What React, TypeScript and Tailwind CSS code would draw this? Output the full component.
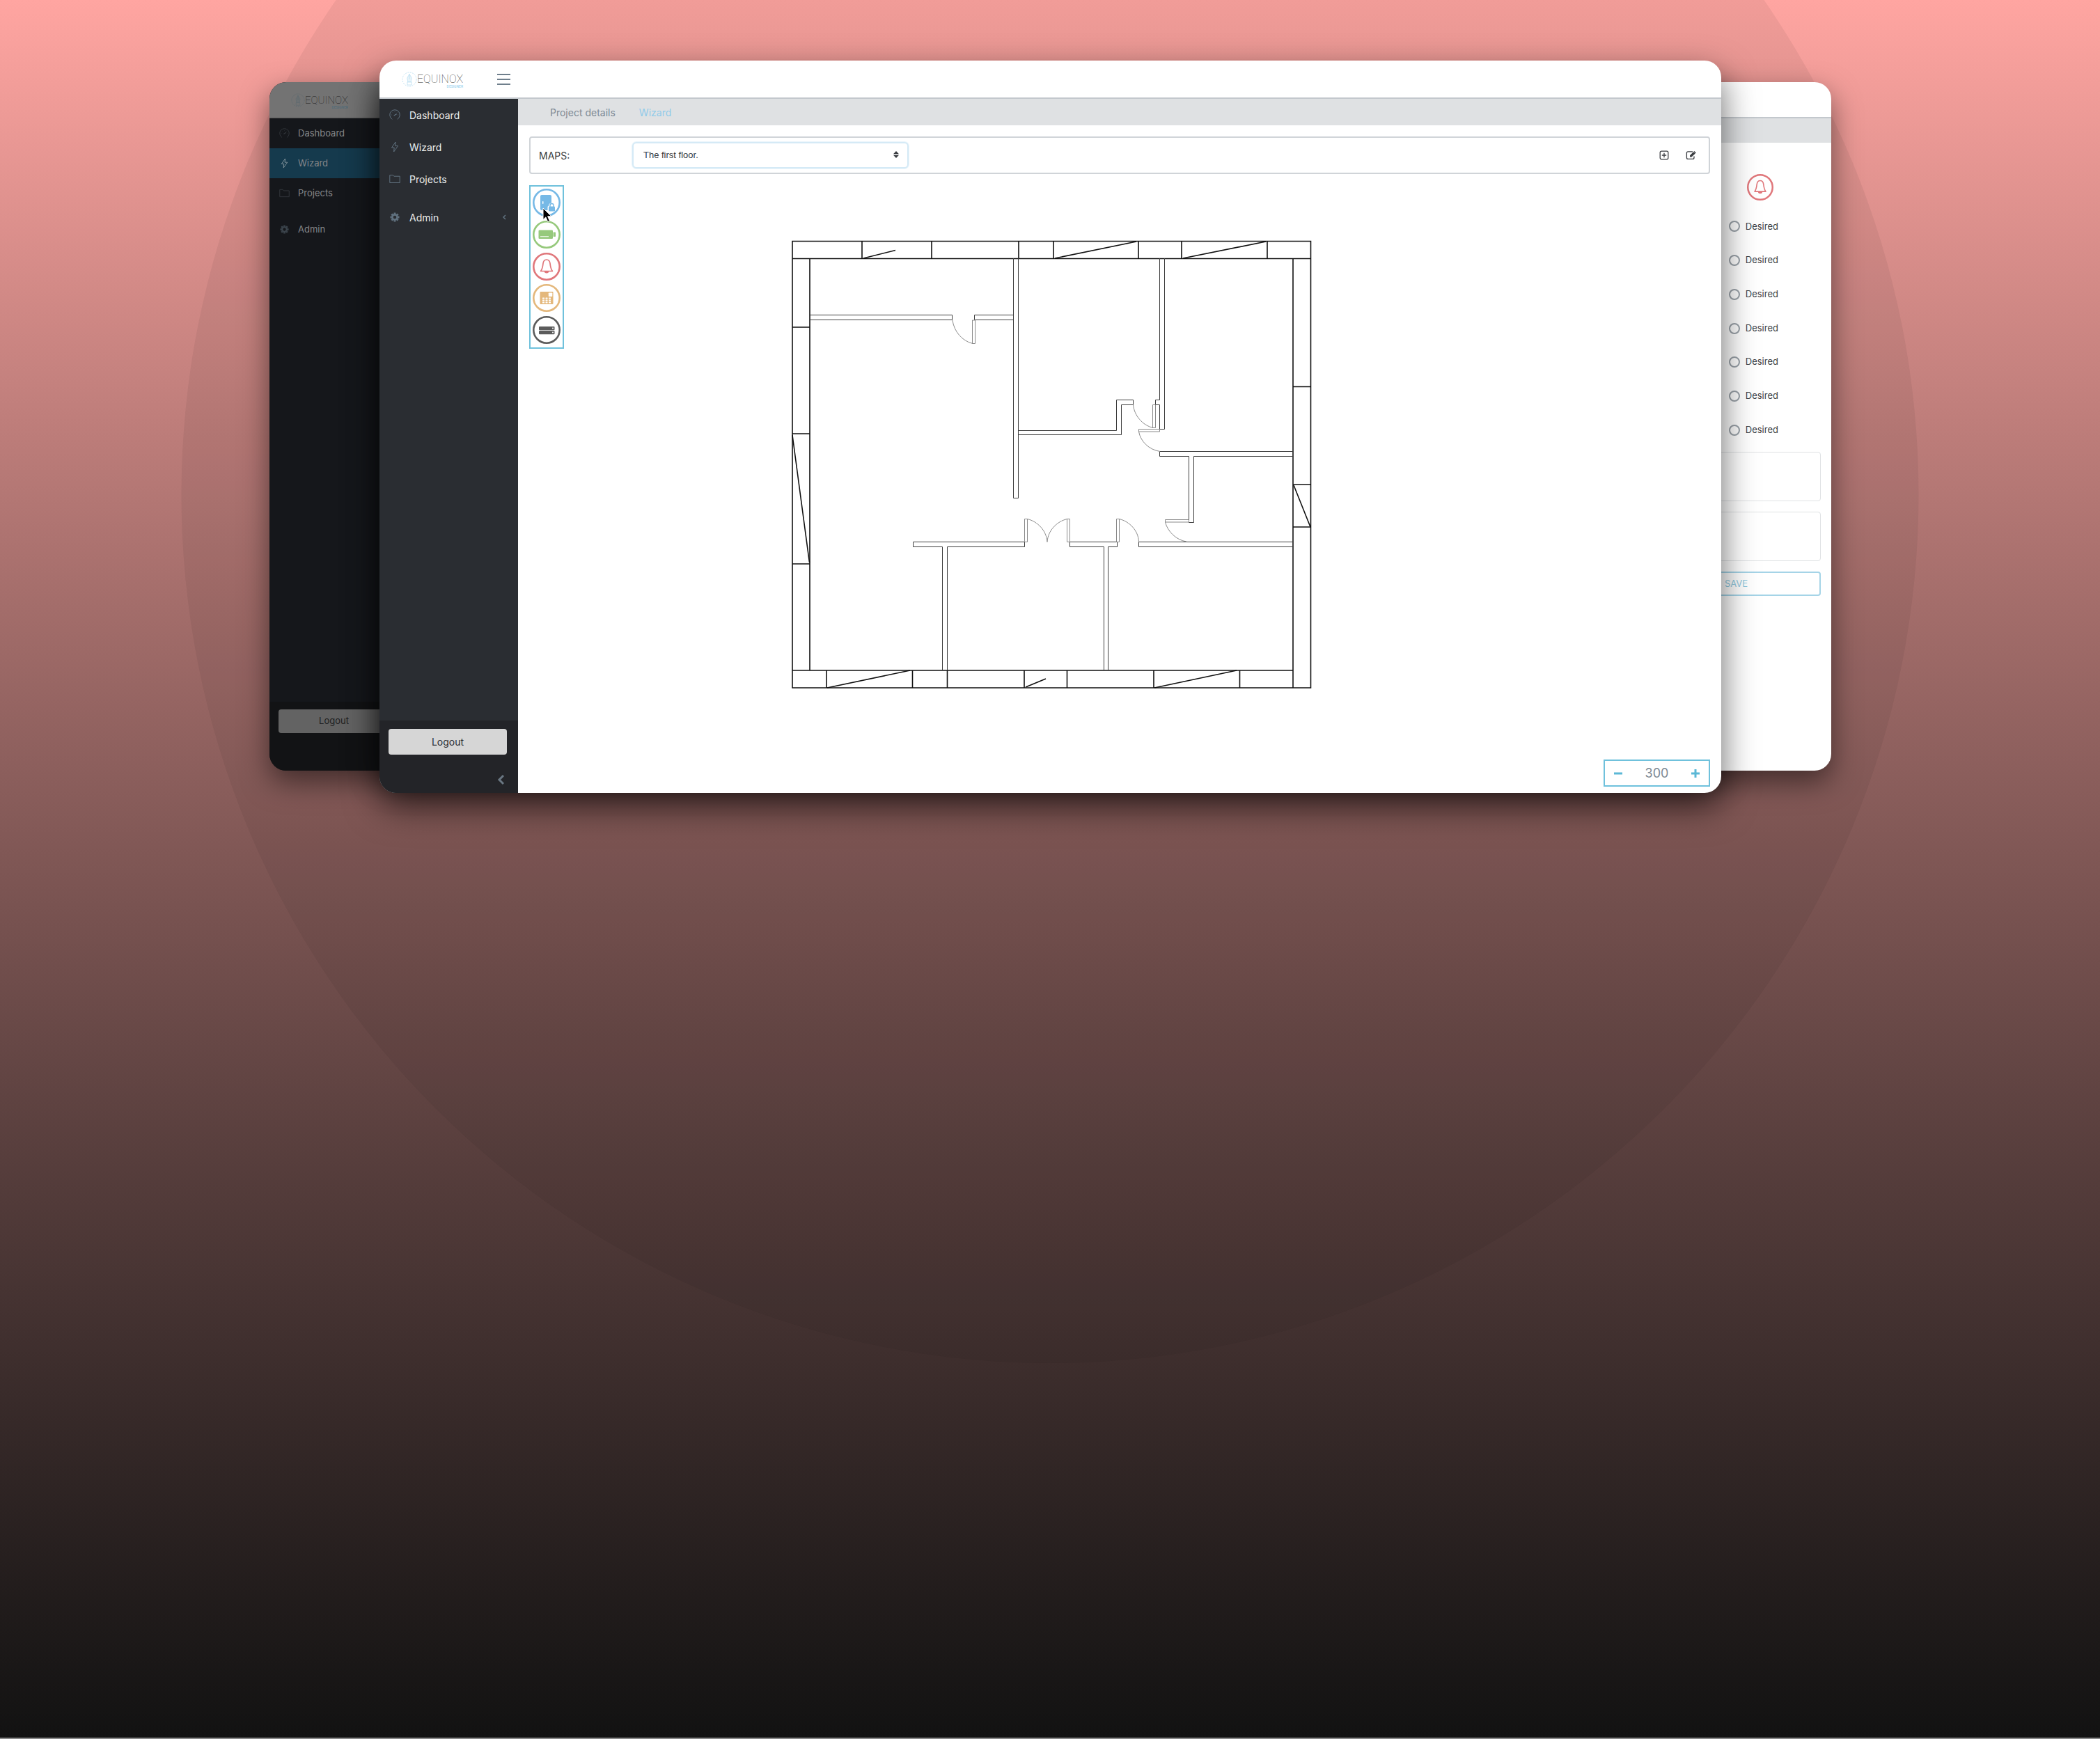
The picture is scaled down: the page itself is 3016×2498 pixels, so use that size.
import React from "react";

const NAV = ["Dashboard", "Wizard", "Projects"];

function Logo({ dim }: { dim?: boolean }) {
  return (
    <span className="flex items-center">
      <svg viewBox="0 0 22 22" className={dim ? "size-5 text-[#5d6a71]" : "size-[22px] text-[#b5dcf0]"} fill="none" stroke="currentColor">
        <circle cx="11" cy="11" r="10" strokeDasharray="2 1.4" strokeWidth="0.8" />
        <path d="M11 3v8M8.500 14.500c.4-3-1.500-4.500-.2-6.500L11 3.500 13.700 8c1.300 2-.6 3.500-.2 6.500z" fill="currentColor" fillOpacity="0.3" strokeWidth="0.7" />
        <path d="M8 15h6v4H8z" strokeWidth="0.7" />
      </svg>
      <span className="flex flex-col items-end pt-1 font-[Roboto,sans-serif]">
        <span className={dim ? "text-[15px] leading-4 font-thin text-[#222]" : "text-[16px] leading-4 font-thin text-[#333]"}>EQUINOX</span>
        <span className={dim ? "text-[5px] leading-[4px] text-[#4b6b7b]" : "text-[5px] leading-[4px] text-[#8accec]"}>DESIGNER</span>
      </span>
    </span>
  );
}

function NavIcon({ name, className }: { name: string; className: string }) {
  if (name === "Dashboard")
    return (
      <svg viewBox="0 0 16 16" className={className} fill="none" stroke="currentColor" strokeLinecap="round">
        <path d="M4 14.200A7.300 7.300 0 1 1 12 14.200" />
        <path d="M7.200 8.800l3-1.800" strokeWidth="1.300" />
        <path d="M3.200 8h.4M5 4.800l.3.300M8 3.400v.3M11 4.800l-.2.200M12.600 8h.3" strokeWidth="0.500" />
      </svg>
    );
  if (name === "Wizard")
    return (
      <svg viewBox="0 0 16 16" className={className} fill="none" stroke="currentColor" strokeLinejoin="round">
        <path d="M9.200 1L3.500 9h3.700L6.600 15 12.500 6.600H8.600z" />
      </svg>
    );
  if (name === "Projects")
    return (
      <svg viewBox="0 0 16 16" className={className} fill="none" stroke="currentColor" strokeLinejoin="round">
        <path d="M.8 2.500h4.700l1.300 1.700h8.400v9.300H.8z" />
      </svg>
    );
  return (
    <svg viewBox="0 0 16 16" className={className}>
      <circle cx="8" cy="8" r="3.600" fill="none" stroke="currentColor" strokeWidth="2.600" />
      <path d="M8 1.500v2M8 12.500v2M1.500 8h2M12.500 8h2M3.400 3.400l1.500 1.500M11.100 11.100l1.500 1.500M3.400 12.600l1.500-1.500M11.100 4.900l1.500-1.500" stroke="currentColor" strokeWidth="2.800" />
    </svg>
  );
}

const COLORS: Record<string, string> = {
  door: "#76b9e6",
  camera: "#96c97c",
  bell: "#e0777b",
  keypad: "#e4b87c",
  server: "#5c5c5c",
};

const DIGITS = [0, 1, 2];

function Device({ kind, className }: { kind: string; className: string }) {
  const c = COLORS[kind];
  return (
    <svg viewBox="0 0 40 40" className={className} fill={c}>
      <circle cx="20" cy="20" r="18.700" fill="none" stroke={c} strokeWidth="2.600" />
      {kind === "door" && (
        <>
          <path d="M13 9h12a2 2 0 0 1 2 2v9.500a4.500 4.500 0 0 0-4 4.300A2 2 0 0 0 21.500 27v4H13a2 2 0 0 1-2-2V11a2 2 0 0 1 2-2z" />
          <rect x="14" y="18" width="1.500" height="4" rx="0.700" fill="white" />
          <rect x="23" y="25.500" width="9" height="7" rx="1.200" />
          <path d="M25 26v-2a2.500 2.500 0 0 1 5 0v2" fill="none" stroke={c} strokeWidth="1.400" />
        </>
      )}
      {kind === "camera" && (
        <>
          <rect x="8.500" y="13.500" width="20.500" height="12.500" rx="1.200" />
          <rect x="29.500" y="16.500" width="3.500" height="6.500" rx="0.700" />
          <path d="M11 22.800h12" stroke="white" strokeWidth="1.100" />
        </>
      )}
      {kind === "bell" && (
        <>
          <path d="M20 10c-3 0-4.600 2.300-5 5.300-.5 5-1.200 8.200-3.400 11.200h16.800c-2.200-3-2.900-6.200-3.400-11.200-.4-3-2-5.300-5-5.300z" fill="none" stroke={c} strokeWidth="1.700" strokeLinejoin="round" />
          <path d="M16.800 27h6.400a3.200 2.500 0 0 1-6.400 0z" />
        </>
      )}
      {kind === "keypad" && (
        <>
          <rect x="10.500" y="11" width="19" height="18" rx="1" />
          <rect x="22.800" y="12.500" width="5.500" height="5.500" rx="0.800" fill="white" />
          {DIGITS.map((r) =>
            DIGITS.map((k) => <rect key={`${r}-${k}`} x={14 + k * 4.500} y={19.500 + r * 3} width="3" height="2" rx="0.500" fill="white" />),
          )}
        </>
      )}
      {kind === "server" && (
        <>
          <rect x="9" y="15" width="22.500" height="5.200" rx="1" />
          <rect x="9" y="21" width="22.500" height="5.200" rx="1" />
          <circle cx="29" cy="17.600" r="1" fill="white" />
          <circle cx="29" cy="23.600" r="1" fill="white" />
        </>
      )}
    </svg>
  );
}

function FloorPlan() {
  return (
    <svg viewBox="1136 344 749 647" className="w-[749px] max-w-full" fill="none" role="img" aria-label="Floor plan">
      <g stroke="#111" strokeWidth="1.600">
        <path d="M1138 346.500H1882.500V988H1138z" />
        <path d="M1138 371.500H1882M1163 371V963M1138 963H1857M1857 371V988" />
        <path d="M1238 346v25M1338 346v25M1463 346v25M1513 346v25M1635 346v25M1697 346v25M1820 346v25" />
        <path d="M1138 470h25M1138 623h25M1138 810h25M1857 555.500h25M1857 696h25M1857 757h25" />
        <path d="M1187 963v25M1310.500 963v25M1360.500 963v25M1471 963v25M1532.500 963v25M1657 963v25M1780.500 963v25" />
        <path d="M1240 371l46-11.500M1515 371l117-24M1699 371l119-24M1138 625l24.500 183M1188 988l119-25M1473 987l29-12M1658 988l118-25M1858 697l24 60" />
      </g>
      <g stroke="#3c3c3c" strokeWidth="1">
        <path d="M1163 452.500H1367.500V459.500H1163M1455.500 452.500H1399.500V459.500H1455.500" />
        <path d="M1455.500 371V715.500H1462.500V371" />
        <path d="M1462.500 618.500H1603.500V574.500H1627.500V581.500H1610.500V624.500H1462.500" />
        <path d="M1665.500 371V574.500H1659.500V581.500H1665.500V616.500H1672.500V371" />
        <path d="M1857 648.500H1665.500V655.500H1707.500V750.500H1714.500V655.500H1857" />
        <path d="M1353.500 963V785.500H1311.500V778.500H1471.500V785.500H1360.500V963" />
        <path d="M1585.500 963V785.500H1536.500V778.500H1604.500V785.500H1591.500V963" />
        <path d="M1857 778.500H1635.500V785.500H1857" />
      </g>
      <g stroke="#8a8a8a" strokeWidth="1">
        <path d="M1396.500 460h4v33.500h-4zM1655.500 581.500h4v33h-4zM1635.500 616.500h30v3.500h-30zM1673.500 746.500h34v3.500h-34z" />
        <path d="M1471.500 745.500h4v33h-4zM1532.500 745.500h4v33h-4zM1603.500 745.500h4v33h-4z" />
        <path d="M1368 460C1370 476 1382 490 1397 493.500M1627.500 581.500C1629 597 1641 611 1656 614.500M1635.500 620C1638 634 1650 646 1666 648.500M1673.500 750C1677 764 1690 776 1704 778" />
        <path d="M1475.500 745.500C1490 749 1503 762 1504 778.500C1505 762 1518 749 1532.500 745.500M1607.500 745.500C1622 749 1635 762 1635.500 778.500" />
      </g>
    </svg>
  );
}

function BackLeft() {
  return (
    <section className="z-0 col-start-2 col-end-4 row-start-1 mt-[31px] mb-8 flex flex-col overflow-hidden rounded-3xl bg-[#15171b] shadow-[0_16px_40px_rgba(0,0,0,0.5)]">
      <header className="flex h-[52px] items-center border-b border-[#555] bg-[#737373] pl-[31px]">
        <Logo dim />
      </header>
      <nav className="flex grow flex-col text-[13px] text-[#85878a]">
        {NAV.map((n) => (
          <a key={n} href="#" className={n === "Wizard" ? "flex h-[43px] items-center gap-3 bg-[#153a4d] pl-[14px]" : "flex h-[43px] items-center gap-3 pl-[14px]"}>
            <NavIcon name={n} className={n === "Wizard" ? "size-[15px] text-[#85959d]" : "size-[15px] text-[#33383d]"} />
            {n}
          </a>
        ))}
        <a href="#" className="mt-[9px] flex h-[43px] items-center gap-3 pl-[14px]">
          <NavIcon name="Admin" className="size-[15px] text-[#3a434b]" />
          Admin
        </a>
      </nav>
      <footer className="h-[99px] bg-[#121315] px-[13px] pt-[11px]">
        <button className="h-[34px] w-[159px] rounded-sm bg-[#636363] text-[13px] text-[#1d1e20]">Logout</button>
      </footer>
    </section>
  );
}

function BackRight() {
  return (
    <section className="z-0 col-start-3 col-end-5 row-start-1 mt-[31px] mb-8 flex flex-col overflow-hidden rounded-3xl bg-white shadow-[0_16px_40px_rgba(0,0,0,0.5)]">
      <div className="h-[52px] border-b-2 border-[#c3c8cd]" />
      <div className="h-[35px] bg-[#dfe1e3]" />
      <form className="flex flex-col items-end pt-[45px] pr-[15px]">
        <div className="mr-[68px]">
          <Device kind="bell" className="size-[38px]" />
        </div>
        <div className="mt-[13px] mr-[61px] flex h-[341px] flex-col">
          {[1, 2, 3, 4, 5, 6, 7].map((i) => (
            <label key={i} className="flex grow items-center gap-2 text-[13px] text-[#3c4043]">
              <input type="radio" name={`device-${i}`} className="size-4 appearance-none rounded-full border-2 border-[#9aa2a9] bg-white" />
              Desired
            </label>
          ))}
        </div>
        <textarea aria-label="Notes" className="mt-[7px] h-[71px] w-[243px] resize-none rounded-sm border border-[#dfe2e4]" />
        <textarea aria-label="Comments" className="mt-[15px] h-[71px] w-[243px] resize-none rounded-sm border border-[#dfe2e4]" />
        <button type="button" className="mt-[15px] h-[35px] w-[243px] rounded-sm border-2 border-[#a5d4e7] text-[13px] text-[#8fc9e0]">SAVE</button>
      </form>
    </section>
  );
}

function Front() {
  return (
    <section className="z-10 col-start-3 row-start-1 flex min-h-[1052px] flex-col overflow-hidden rounded-3xl bg-white shadow-[0_20px_50px_rgba(0,0,0,0.6)]">
      <header className="flex h-[55px] items-center border-b-2 border-[#c3c8cd] pl-[32px]">
        <div className="w-[137px]">
          <Logo />
        </div>
        <button aria-label="Toggle menu" className="flex h-4 w-[19px] flex-col justify-between text-[#6f7f8c]">
          <span className="h-0.5 w-full bg-current" />
          <span className="h-0.5 w-full bg-current" />
          <span className="h-0.5 w-full bg-current" />
        </button>
      </header>
      <div className="flex grow">
        <aside className="flex w-[199px] shrink-0 flex-col bg-[#2a2d32]">
          <nav className="flex grow flex-col text-[14px] text-[#eceded]">
            {NAV.map((n) => (
              <a key={n} href="#" className="flex h-[46px] items-center gap-[13px] pl-[14px]">
                <NavIcon name={n} className="size-4 text-[#60717f]" />
                {n}
              </a>
            ))}
            <a href="#" className="mt-[9px] flex h-[46px] items-center gap-[13px] pr-[17px] pl-[14px]">
              <NavIcon name="Admin" className="size-4 text-[#60717f]" />
              <span className="grow">Admin</span>
              <svg viewBox="0 0 6 8" className="h-2 w-1.5 text-[#60717f]" fill="none" stroke="currentColor" strokeWidth="1.500">
                <path d="M5 1L2 4l3 3" />
              </svg>
            </a>
          </nav>
          <footer className="flex h-[104px] flex-col justify-between bg-[#232428] pt-3 pr-4 pb-[11px] pl-[13px]">
            <button className="h-[37px] w-full rounded-sm bg-[#d6d6d6] text-[14px] text-[#2b2e33]">Logout</button>
            <button aria-label="Collapse sidebar" className="mr-1 self-end text-[#6a7783]">
              <svg viewBox="0 0 10 16" className="h-4 w-2.5" fill="none" stroke="currentColor" strokeWidth="3">
                <path d="M9 2L3 8l6 6" />
              </svg>
            </button>
          </footer>
        </aside>
        <main className="flex min-w-0 grow flex-col">
          <div className="flex h-[38px] items-center gap-[34px] bg-[#dfe1e3] pl-[46px] text-[14px]">
            <a href="#" className="text-[#7d8994]">Project details</a>
            <a href="#" className="text-[#8fcbea]">Wizard</a>
          </div>
          <div className="mx-4 mt-4 flex h-[54px] items-center rounded-sm border-2 border-[#d0d4d8] pr-[17px] pl-3 text-[14px] text-[#3a3d41]">
            <label htmlFor="map" className="w-[134px]">MAPS:</label>
            <div className="relative">
              <select id="map" className="h-[38px] w-[397px] appearance-none rounded-md border-2 border-[#d5eaf6] bg-white px-[14px] font-['Liberation_Sans',sans-serif] text-[13px] ring-1 ring-[#eaf5fb] outline-none">
                <option>The first floor.</option>
              </select>
              <svg viewBox="0 0 8 10" className="pointer-events-none absolute top-[13px] right-[14px] h-2.5 w-2" fill="#3a3d41">
                <path d="M4 0l4 4.300H0zM4 10l4-4.300H0z" />
              </svg>
            </div>
            <div className="ml-auto flex gap-6">
              <button aria-label="Add map">
                <svg viewBox="0 0 14 14" className="size-[14px]" fill="none" stroke="#3a3d41" strokeWidth="1.300">
                  <rect x="1.200" y="1.200" width="11.600" height="11.600" rx="2" />
                  <path d="M7 3.800v6.400M3.800 7h6.400" />
                </svg>
              </button>
              <button aria-label="Edit map">
                <svg viewBox="0 0 16 14" className="h-[14px] w-4" fill="none" stroke="#3a3d41" strokeWidth="1.300">
                  <path d="M10 1.800H3.300A1.900 1.900 0 0 0 1.400 3.700v6.800a1.900 1.900 0 0 0 1.900 1.900h6.800a1.900 1.900 0 0 0 1.900-1.900V8.500" />
                  <path d="M12.300 1l2.500 2.400-6.300 6.200H6V7.200z" fill="#3a3d41" stroke="none" />
                  <path d="M11.200 2.200l2.400 2.300" stroke="white" strokeWidth="0.500" />
                </svg>
              </button>
            </div>
          </div>
          <div className="mt-4 flex grow px-4">
            <div className="relative flex h-[235px] w-[50px] shrink-0 flex-col items-center justify-between border-2 border-[#6fc1dc] pt-[3px] pb-[5px]">
              {Object.keys(COLORS).map((k) => (
                <button key={k} aria-label={k}>
                  <Device kind={k} className="size-10" />
                </button>
              ))}
              <svg viewBox="0 0 14 22" className="absolute top-[30px] left-[17px] h-[22px] w-[14px]" fill="black" stroke="white" strokeWidth="1">
                <path d="M1 1v16.500l3.800-3.600 2.900 6.600 2.800-1.200-2.900-6.500h5.400z" />
              </svg>
            </div>
            <div className="flex grow flex-col items-center pt-[78px] pr-[245px]">
              <FloorPlan />
            </div>
          </div>
          <div className="mr-4 mb-[9px] flex h-[39px] w-[153px] items-center justify-between self-end border-2 border-[#6fc1dc] px-[13px] text-[#5bb8d6]">
            <button aria-label="Zoom out">
              <svg viewBox="0 0 12 12" className="size-3" stroke="currentColor" strokeWidth="3">
                <path d="M0 6h12" />
              </svg>
            </button>
            <output className="text-[18px] text-[#7d8994]">300</output>
            <button aria-label="Zoom in">
              <svg viewBox="0 0 12 12" className="size-3" stroke="currentColor" strokeWidth="3">
                <path d="M0 6h12M6 0v12" />
              </svg>
            </button>
          </div>
        </main>
      </div>
    </section>
  );
}

export default function App() {
  return (
    <div className="relative isolate min-h-screen overflow-hidden border-b-2 border-[#8a8a8a] bg-linear-to-b from-[#ffa5a1] to-[#121212] font-[Inter,sans-serif]">
      <div className="absolute -top-[537px] left-1/2 -z-10 size-[2495px] -translate-x-1/2 rounded-full bg-[#121212]/6" />
      <div className="grid grid-cols-[387fr_158fr_1927fr_158fr_386fr] pt-[87px]">
        <BackLeft />
        <BackRight />
        <Front />
      </div>
    </div>
  );
}
